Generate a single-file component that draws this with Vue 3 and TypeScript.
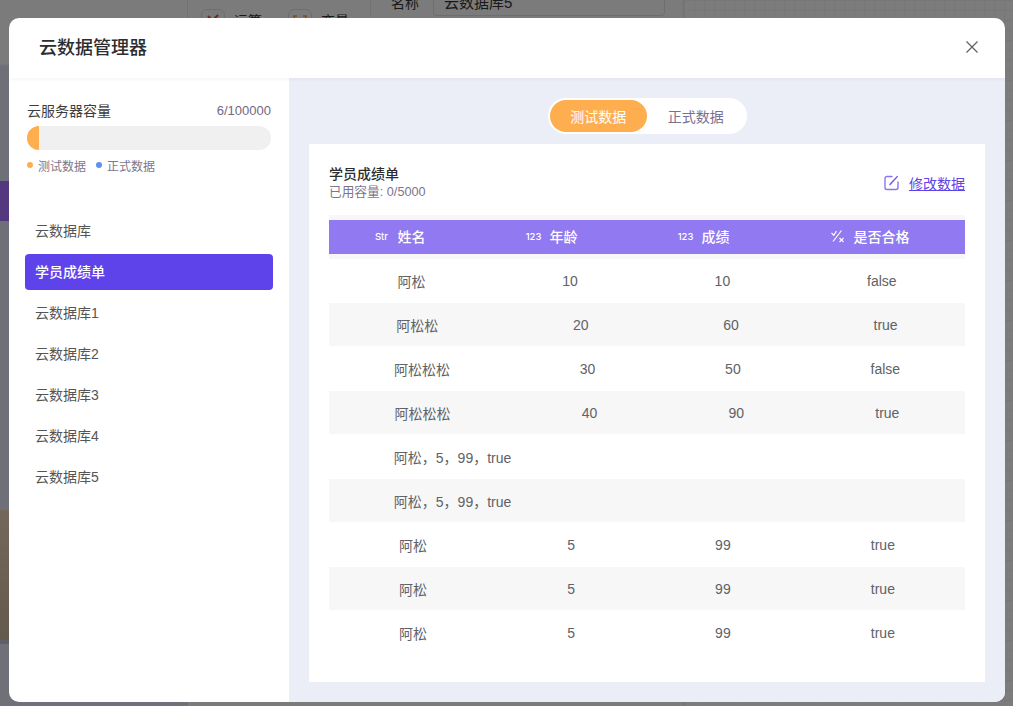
<script setup lang="ts">
import { ref } from 'vue'

// 左侧数据库列表
const databases = ['云数据库', '学员成绩单', '云数据库1', '云数据库2', '云数据库3', '云数据库4', '云数据库5']
const activeDb = ref('学员成绩单')

const tabs = ['测试数据', '正式数据']
const activeTab = ref('测试数据')

const used = 6
const total = 100000

const columns = [
  { type: 'Str', name: '姓名' },
  { type: '123', name: '年龄' },
  { type: '123', name: '成绩' },
  { type: 'bool', name: '是否合格' }
]

const rows: string[][] = [
  ['阿松', '10', '10', 'false'],
  ['阿松松', '20', '60', 'true'],
  ['阿松松松', '30', '50', 'false'],
  ['阿松松松', '40', '90', 'true'],
  ['阿松，5，99，true', '', '', ''],
  ['阿松，5，99，true', '', '', ''],
  ['阿松', '5', '99', 'true'],
  ['阿松', '5', '99', 'true'],
  ['阿松', '5', '99', 'true']
]
</script>

<template>
  <div class="page">
    <!-- 弹窗背后的页面 -->
    <div class="backdrop">
      <div class="bg-side">
        <div class="bg-purple"></div>
        <div class="bg-photo"></div>
      </div>
      <div class="bg-tools">
        <div class="bg-tool">
          <span class="bg-chip">
            <svg width="22" height="22" viewBox="0 0 22 22" fill="none" stroke="#e5502e" stroke-width="2">
              <path d="M6 6 L11 11 L16 16 M16 5 L7 14" />
            </svg>
          </span>
          运算
        </div>
        <div class="bg-tool">
          <span class="bg-chip">
            <svg width="22" height="22" viewBox="0 0 22 22" fill="none" stroke="#e9a03c" stroke-width="1.6">
              <path d="M8 6 H5 V16 H8 M14 6 H17 V16 H14" />
            </svg>
          </span>
          变量
        </div>
      </div>
      <div class="bg-form">
        <span class="bg-label">名称</span>
        <div class="bg-input">云数据库5</div>
      </div>
      <div class="bg-canvas"></div>
    </div>
    <div class="mask"></div>

    <div class="modal">
      <header class="modal-header">
        <h2>云数据管理器</h2>
        <svg class="close" width="14" height="14" viewBox="0 0 14 14">
          <path d="M1.5 1.5 L12.5 12.5 M12.5 1.5 L1.5 12.5" stroke="#5c5f63" stroke-width="1.2" fill="none" />
        </svg>
      </header>

      <div class="modal-body">
        <aside class="sidebar">
          <div class="capacity">
            <div class="capacity-top">
              <span class="capacity-title">云服务器容量</span>
              <span class="capacity-num">{{ used }}/{{ total }}</span>
            </div>
            <div class="bar"><div class="bar-fill"></div></div>
            <div class="legend">
              <span class="dot orange"></span><span class="legend-text">测试数据</span>
              <span class="dot blue"></span><span class="legend-text">正式数据</span>
            </div>
          </div>
          <ul class="db-list">
            <li v-for="db in databases" :key="db" :class="{ active: db === activeDb }" @click="activeDb = db">
              {{ db }}
            </li>
          </ul>
        </aside>

        <main class="content">
          <div class="tabs">
            <button
              v-for="tab in tabs"
              :key="tab"
              class="tab"
              :class="{ active: tab === activeTab }"
              @click="activeTab = tab"
            >
              {{ tab }}
            </button>
          </div>

          <section class="panel">
            <div class="panel-head">
              <div>
                <div class="panel-title">学员成绩单</div>
                <div class="panel-sub">已用容量: 0/5000</div>
              </div>
              <div class="edit">
                <svg width="15" height="16" viewBox="0 0 15 16" fill="none">
                  <path d="M8 1.5 H3 A2 2 0 0 0 1 3.5 V12.5 A2 2 0 0 0 3 14.5 H12 A2 2 0 0 0 14 12.5 V7" stroke="#8a75f0" stroke-width="1.4" stroke-linecap="round" />
                  <path d="M6 9.5 L13.2 1.6" stroke="#6a50ec" stroke-width="1.4" stroke-linecap="round" />
                </svg>
                <a class="edit-link">修改数据</a>
              </div>
            </div>

            <div class="table">
              <div class="thead">
                <div class="thead-inner">
                  <div v-for="col in columns" :key="col.name" class="th">
                    <span class="type">
                      <svg v-if="col.type === 'bool'" width="14" height="14" viewBox="0 0 14 14" fill="none" stroke="#fff" stroke-width="1.2">
                        <path d="M0.5 4 L2.8 6.2 L5.5 2" />
                        <path d="M2 12.5 L10.5 1.5" />
                        <path d="M8.5 9 L12.5 13 M12.5 9 L8.5 13" />
                      </svg>
                      <template v-else>{{ col.type }}</template>
                    </span>
                    <span>{{ col.name }}</span>
                  </div>
                </div>
              </div>
              <div v-for="(row, i) in rows" :key="i" class="tr">
                <span v-for="(cell, j) in row" :key="j">{{ cell }}</span>
              </div>
            </div>
          </section>
        </main>
      </div>
    </div>
  </div>
</template>

<style scoped>
.page {
  position: relative;
  width: 1013px;
  height: 706px;
  overflow: hidden;
  font-family: 'Liberation Sans', 'Noto Sans CJK SC', sans-serif;
}

.backdrop {
  display: flex;
  height: 100%;
  background: #f6f6f6;
}

.bg-side {
  width: 187px;
  padding-top: 181px;
  background: linear-gradient(#f6f6f6 64px, #dfe1ee 66px, #dfe1f0);
  box-sizing: border-box;
}

.bg-purple {
  height: 40px;
  background: #a970fe;
}

.bg-photo {
  height: 130px;
  margin-top: 289px;
  background: linear-gradient(#e6d0b2, #c8b49a);
  border-bottom: 4px solid #bcc0cc;
}

.bg-tools {
  display: flex;
  gap: 26px;
  width: 183px;
  padding: 9px 0 0 13px;
  box-sizing: border-box;
  border-left: 1px solid #e2e2e2;
  font-size: 14px;
  color: #333;
}

.bg-tool {
  display: flex;
  gap: 9px;
  line-height: 24px;
  height: 24px;
}

.bg-chip {
  display: block;
  width: 24px;
  height: 24px;
  border: 1px solid #ddd;
  border-radius: 6px;
  box-sizing: border-box;
}

.bg-form {
  display: flex;
  gap: 14px;
  width: 313px;
  height: 16px;
  padding-left: 20px;
  box-sizing: border-box;
  font-size: 14px;
  color: #333;
  border-left: 1px solid #e2e2e2;
}

.bg-label {
  line-height: 6px;
}

.bg-input {
  width: 232px;
  height: 16px;
  line-height: 6px;
  padding-left: 10px;
  box-sizing: border-box;
  border: 1px solid #ddd;
  border-top: none;
  border-radius: 0 0 4px 4px;
  font-size: 15px;
}

.bg-canvas {
  flex: 1;
  border-left: 1px solid #e2e2e2;
  background-color: #f9f9f9;
  background-image: linear-gradient(#efefef 1px, transparent 1px), linear-gradient(90deg, #efefef 1px, transparent 1px);
  background-size: 10px 10px;
}

.mask {
  position: absolute;
  inset: 0;
  background: rgba(0, 0, 0, 0.5);
}

.modal {
  position: absolute;
  left: 9px;
  top: 18px;
  width: 996px;
  height: 684px;
  display: flex;
  flex-direction: column;
  background: #fff;
  border-radius: 10px;
  overflow: hidden;
}

.modal-header {
  display: flex;
  align-items: center;
  justify-content: space-between;
  height: 60px;
  flex-shrink: 0;
  padding: 0 26px 4px 30px;
  box-sizing: border-box;
  box-shadow: 0 1px 4px rgba(0, 0, 0, 0.05);
  position: relative;
}

.modal-header h2 {
  margin: 0;
  font-size: 18px;
  font-weight: 500;
  color: #2b2d30;
}

.close {
  margin-top: 2px;
}

.modal-body {
  flex: 1;
  display: flex;
  min-height: 0;
}

.sidebar {
  width: 280px;
  flex-shrink: 0;
}

.capacity {
  padding: 22px 18px 0;
}

.capacity-top {
  display: flex;
  justify-content: space-between;
  align-items: center;
  height: 20px;
}

.capacity-title {
  font-size: 14px;
  color: #3c3d40;
}

.capacity-num {
  font-size: 13px;
  color: #71697f;
}

.bar {
  height: 24px;
  margin-top: 6px;
  border-radius: 12px;
  background: #f0f0f0;
  overflow: hidden;
}

.bar-fill {
  width: 12px;
  height: 100%;
  background: #ffae4f;
}

.legend {
  display: flex;
  align-items: center;
  height: 18px;
  margin-top: 6px;
  font-size: 12px;
  color: #7d7589;
}

.dot {
  width: 6px;
  height: 6px;
  border-radius: 50%;
  margin-right: 5px;
}

.orange {
  background: #ffae4f;
}

.blue {
  background: #5b8ff9;
}

.legend-text {
  margin-right: 10px;
}

.db-list {
  list-style: none;
  margin: 0;
  padding: 39px 16px 0;
  display: flex;
  flex-direction: column;
  gap: 5px;
}

.db-list li {
  height: 36px;
  line-height: 36px;
  padding-left: 10px;
  border-radius: 4px;
  font-size: 14px;
  color: #555;
}

.db-list li.active {
  background: #5f43ea;
  color: #fff;
  font-weight: 500;
}

.content {
  flex: 1;
  padding: 20px 20px;
  background: #ebeef6;
  display: flex;
  flex-direction: column;
  align-items: center;
  min-width: 0;
}

.tabs {
  display: flex;
  width: 199px;
  height: 36px;
  padding: 2px;
  box-sizing: border-box;
  background: #fff;
  border-radius: 18px;
  flex-shrink: 0;
}

.tab {
  flex: 1;
  border: none;
  background: transparent;
  border-radius: 16px;
  font-family: inherit;
  font-size: 14px;
  color: #7a7190;
  padding: 0;
}

.tab.active {
  background: #ffae4f;
  color: #fff;
}

.panel {
  align-self: stretch;
  flex: 1;
  margin-top: 10px;
  padding: 20px;
  background: #fff;
}

.panel-head {
  display: flex;
  justify-content: space-between;
  align-items: center;
  height: 36px;
  margin-bottom: 15px;
}

.panel-title {
  font-size: 14px;
  line-height: 20px;
  font-weight: 500;
  color: #2b2d30;
}

.panel-sub {
  font-size: 12.7px;
  line-height: 15px;
  margin-top: 1px;
  color: #7d7589;
}

.edit {
  display: flex;
  align-items: center;
  gap: 10px;
  margin-top: 1px;
}

.edit-link {
  font-size: 14px;
  color: #5f43ea;
  text-decoration: underline;
}

.thead {
  height: 44px;
  padding: 5px 0;
  box-sizing: border-box;
  background: #f7f7f7;
}

.thead-inner {
  display: flex;
  justify-content: space-around;
  align-items: center;
  height: 34px;
  padding-bottom: 2px;
  box-sizing: border-box;
  background: #9079f1;
  color: #fff;
  font-size: 14px;
  font-weight: 500;
}

.th {
  display: flex;
  align-items: center;
  padding-right: 10px;
}

.type {
  display: flex;
  align-items: center;
  justify-content: center;
  width: 14px;
  height: 14px;
  margin-right: 9px;
  font-family: Inter, sans-serif;
  font-size: 9.5px;
  font-weight: 500;
  white-space: nowrap;
}

.tr {
  display: flex;
  justify-content: space-around;
  align-items: center;
  height: 44px;
  box-sizing: border-box;
  font-size: 14px;
  color: #606266;
}

.tr:nth-child(odd) {
  background: #f7f7f7;
  border-bottom: 1px solid #fff;
}
</style>

<style>
html,
body {
  margin: 0;
  overflow: hidden;
}
</style>
